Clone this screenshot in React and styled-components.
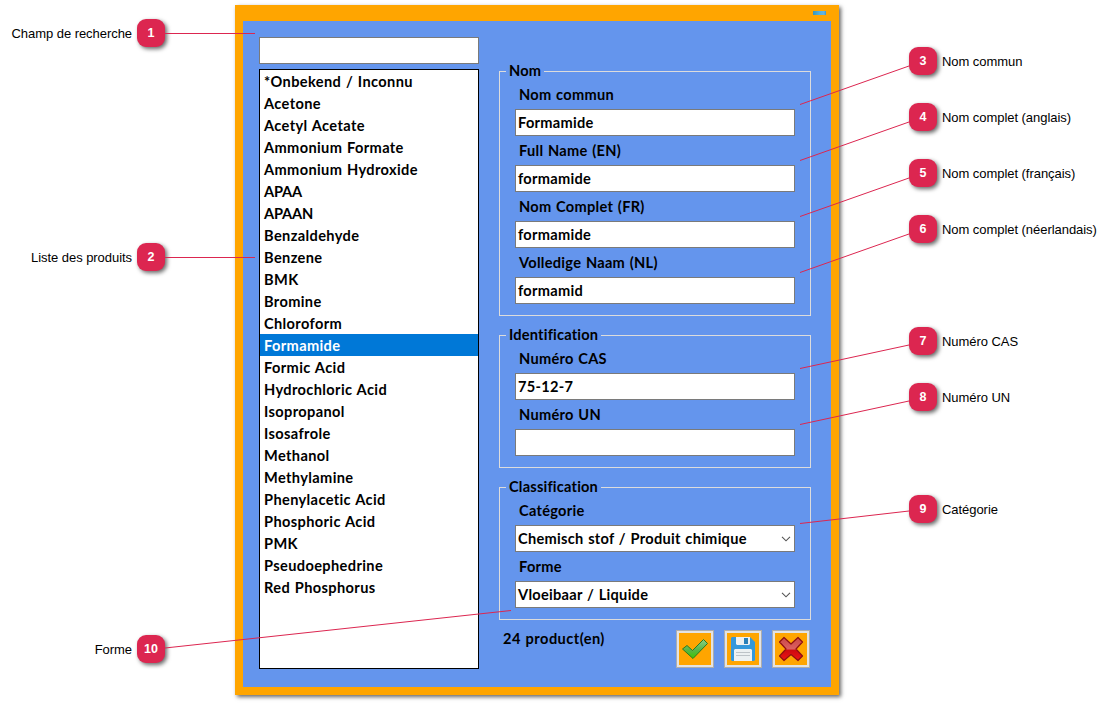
import React from "react";
import styled, { createGlobalStyle } from "styled-components";

const Global = createGlobalStyle`
  * { box-sizing: border-box; }
  body { margin: 0; background: #fff; }
`;

const Page = styled.main`
  position: relative;
  display: flex;
  width: 1113px;
  height: 704px;
  overflow: hidden;
  background: #fff;
`;

const CalloutColumn = styled.aside`
  display: flex;
  flex-direction: column;
  width: ${(p) => p.$width}px;
`;

const Callout = styled.div`
  display: flex;
  align-items: center;
  flex-direction: ${(p) => (p.$side === "left" ? "row-reverse" : "row")};
  gap: 5px;
  height: 28px;
  margin-top: ${(p) => p.$space}px;
  padding-left: ${(p) => (p.$side === "left" ? 0 : 70)}px;
  font: 13px/28px "Liberation Sans", Arial, sans-serif;
  letter-spacing: -0.05px;
  color: #000;
  white-space: nowrap;
`;

const CalloutText = styled.span`
  padding-top: 2px;
`;

const Badge = styled.span`
  width: 28px;
  height: 28px;
  flex: none;
  border-radius: 9px;
  background: #dc2650;
  box-shadow: 2px 2px 4px rgba(0, 0, 0, 0.6);
  color: #fff;
  font-size: 12.5px;
  line-height: 29px;
  font-weight: bold;
  text-align: center;
`;

const AppWindow = styled.section`
  width: 604px;
  height: 690px;
  margin: 5px 0 0 70px;
  padding: 0 8px 8px;
  background: #ffa500;
  box-shadow: 2px 2px 4px rgba(0, 0, 0, 0.6);
`;

const TitleBar = styled.header`
  display: flex;
  justify-content: flex-end;
  height: 16px;
  padding: 6px 5px 0;
`;

const Minimize = styled.span`
  width: 13px;
  height: 4px;
  background: linear-gradient(90deg, #3a96b8, #55b0dc 50%, #66b4e0 85%, #4596c0);
`;

const Body = styled.div`
  display: flex;
  gap: 20px;
  height: 666px;
  padding: 16px 16px 0;
  background: #6495ed;
  color: #000;
  font: bold 14.6px/22px Lato, Carlito, Calibri, sans-serif;
  letter-spacing: 0.37px;
  word-spacing: 0.8px;
`;

const ListPane = styled.div`
  display: flex;
  flex-direction: column;
  gap: 5px;
  width: 220px;
`;

const Field = styled.div`
  display: flex;
  align-items: center;
  justify-content: space-between;
  height: 27px;
  padding: 0 3px 0 2px;
  border: 1px solid #7a7a7a;
  background: #fff;
  white-space: nowrap;
`;

const ProductList = styled.ul`
  height: 600px;
  margin: 0;
  padding: 0;
  border: 1px solid #000;
  background: #fff;
  list-style: none;
`;

const Product = styled.li`
  height: 22px;
  padding: 1px 0 0 4px;
  background: ${(p) => (p.$selected ? "#0078d7" : "transparent")};
  color: ${(p) => (p.$selected ? "#fff" : "#000")};
  letter-spacing: ${(p) => (p.$capitals ? "-0.2px" : "inherit")};
  white-space: nowrap;
`;

const FormPane = styled.div`
  display: flex;
  flex-direction: column;
  width: 312px;
  padding-top: 34px;
  letter-spacing: 0.28px;
`;

const Group = styled.div`
  height: ${(p) => p.$height}px;
  margin-bottom: 19px;
  padding: 0 15px;
  border: 1px solid #dcdcdc;
`;

const Legend = styled.div`
  width: fit-content;
  height: 22px;
  margin: -12px 0 2px -9px;
  padding: 0 3px;
  background: #6495ed;
  letter-spacing: 0.2px;
`;

const Label = styled.div`
  height: 25px;
  padding-left: 4px;
`;

const LabelledField = styled.div`
  height: 56px;
`;

const Footer = styled.footer`
  display: flex;
  justify-content: space-between;
  margin-top: -9px;
  padding: 0 1px 0 4px;
`;

const Count = styled.span`
  margin-top: -2px;
  letter-spacing: 0.45px;
`;

const Buttons = styled.div`
  display: flex;
  gap: 10px;
`;

const IconButton = styled.button`
  display: grid;
  place-items: center;
  width: 38px;
  height: 38px;
  padding: 0;
  border: 1px solid #adadad;
  background: #ffa500;
  box-shadow: inset 0 0 0 2px #e3e3e3;
`;

const Pointers = styled.svg`
  position: absolute;
  inset: 0;
  pointer-events: none;
`;

const products = [
  "*Onbekend / Inconnu", "Acetone", "Acetyl Acetate", "Ammonium Formate",
  "Ammonium Hydroxide", "APAA", "APAAN", "Benzaldehyde", "Benzene", "BMK",
  "Bromine", "Chloroform", "Formamide", "Formic Acid", "Hydrochloric Acid",
  "Isopropanol", "Isosafrole", "Methanol", "Methylamine", "Phenylacetic Acid",
  "Phosphoric Acid", "PMK", "Pseudoephedrine", "Red Phosphorus",
];

const groups = [
  { title: "Nom", height: 245, fields: [["Nom commun", "Formamide"], ["Full Name (EN)", "formamide"], ["Nom Complet (FR)", "formamide"], ["Volledige Naam (NL)", "formamid"]] },
  { title: "Identification", height: 133, fields: [["Numéro CAS", "75-12-7"], ["Numéro UN", ""]] },
  { title: "Classification", height: 133, select: true, fields: [["Catégorie", "Chemisch stof / Produit chimique"], ["Forme", "Vloeibaar / Liquide"]] },
];

const leftCallouts = [[1, "Champ de recherche", 19], [2, "Liste des produits", 196], [10, "Forme", 364]];
const rightCallouts = [
  [3, "Nom commun", 47], [4, "Nom complet (anglais)", 28], [5, "Nom complet (français)", 28],
  [6, "Nom complet (néerlandais)", 28], [7, "Numéro CAS", 84], [8, "Numéro UN", 28], [9, "Catégorie", 84],
];

const pointers = [
  [165, 33.5, 255, 33.5], [165, 257.5, 255, 257.5], [165, 648, 511, 610.5],
  [909, 66, 800, 104.5], [909, 122, 800, 160.5], [909, 178, 800, 216.5], [909, 234, 800, 272.5],
  [909, 345, 800, 368.5], [909, 401, 800, 424.5], [909, 511, 800, 523.5],
];

const Chevron = () => (
  <svg width="10" height="6" viewBox="0 0 10 6">
    <path d="M1 .8 5 4.8 9 .8" fill="none" stroke="#555" strokeWidth="1.1" />
  </svg>
);

const CheckIcon = () => (
  <svg width="28" height="28" viewBox="0 0 28 28">
    <defs>
      <linearGradient id="green" x2="0" y2="1">
        <stop offset="0" stopColor="#8ccf86" />
        <stop offset=".55" stopColor="#58b548" />
        <stop offset="1" stopColor="#3fc800" />
      </linearGradient>
    </defs>
    <path d="M1.500 14 6 10.500 11.500 15.500 22.500 4.500 26.500 8.500 12 23.500Z" fill="url(#green)" stroke="#2b7a22" strokeLinejoin="round" />
  </svg>
);

const SaveIcon = () => (
  <svg width="24" height="24" viewBox="0 0 24 24">
    <path d="M1 0H19L24 5V23L23 24H1L0 23V1Z" fill="#3498db" />
    <path d="M5 0H19V7L18 8H6L5 7Z" fill="#ecf0f1" />
    <path d="M13 1H17V7H13Z" fill="#2980b9" />
    <path d="M4 12H20L21 13V24H3V13Z" fill="#ecf0f1" />
    <path d="M5 15.500H19M5 18.500H19" stroke="#bdc3c7" />
  </svg>
);

const CrossIcon = () => (
  <svg width="26" height="26" viewBox="0 0 26 26">
    <defs>
      <linearGradient id="red" x2="0" y2="1">
        <stop offset="0" stopColor="#c94848" />
        <stop offset=".5" stopColor="#dc6060" />
        <stop offset=".55" stopColor="#cc0a10" />
        <stop offset="1" stopColor="#ee1515" />
      </linearGradient>
    </defs>
    <path d="M6 1.500 13 8 20 1.500 24.500 6 18 13 24.500 20 20 24.500 13 18.500 6 24.500 1.500 20 8 13 1.500 6Z" fill="url(#red)" stroke="#8e1010" strokeWidth="1.2" strokeLinejoin="round" />
  </svg>
);

export default function App() {
  return (
    <Page>
      <Global />
      <CalloutColumn $width={165}>
        {leftCallouts.map(([n, text, space]) => (
          <Callout key={n} $side="left" $space={space}><Badge>{n}</Badge><CalloutText>{text}</CalloutText></Callout>
        ))}
      </CalloutColumn>
      <AppWindow>
        <TitleBar><Minimize /></TitleBar>
        <Body>
          <ListPane>
            <Field />
            <ProductList>
              {products.map((name) => (
                <Product key={name} $selected={name === "Formamide"} $capitals={name.startsWith("APAA")}>{name}</Product>
              ))}
            </ProductList>
          </ListPane>
          <FormPane>
            {groups.map((g) => (
              <Group key={g.title} $height={g.height}>
                <Legend>{g.title}</Legend>
                {g.fields.map(([label, value]) => (
                  <LabelledField key={label}>
                    <Label>{label}</Label>
                    <Field><span>{value}</span>{g.select && <Chevron />}</Field>
                  </LabelledField>
                ))}
              </Group>
            ))}
            <Footer>
              <Count>24 product(en)</Count>
              <Buttons>
                <IconButton><CheckIcon /></IconButton>
                <IconButton><SaveIcon /></IconButton>
                <IconButton><CrossIcon /></IconButton>
              </Buttons>
            </Footer>
          </FormPane>
        </Body>
      </AppWindow>
      <CalloutColumn $width={274}>
        {rightCallouts.map(([n, text, space]) => (
          <Callout key={n} $side="right" $space={space}><Badge>{n}</Badge><CalloutText>{text}</CalloutText></Callout>
        ))}
      </CalloutColumn>
      <Pointers width="1113" height="704">
        {pointers.map(([x1, y1, x2, y2]) => (
          <line key={y1} x1={x1} y1={y1} x2={x2} y2={y2} stroke="#dc2650" />
        ))}
      </Pointers>
    </Page>
  );
}
